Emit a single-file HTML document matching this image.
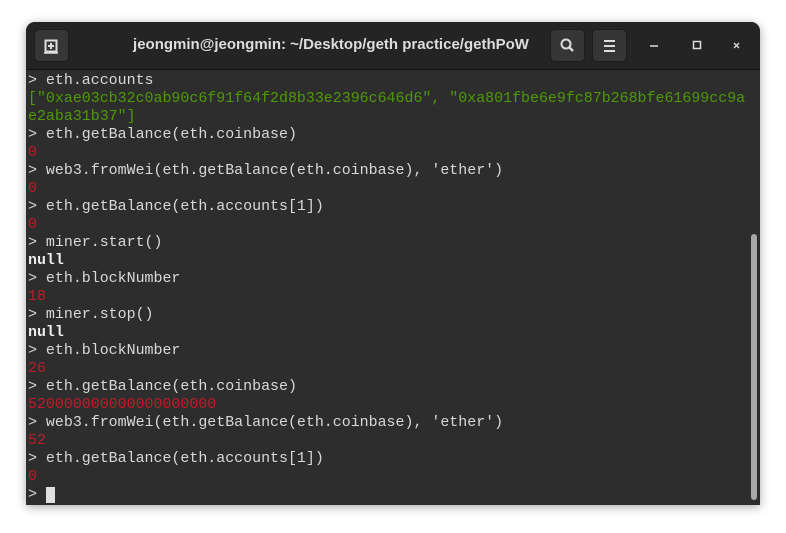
<!DOCTYPE html>
<html><head><style>
body{margin:0;width:786px;height:533px;background:#fff;position:relative;overflow:hidden;font-family:"Liberation Sans",sans-serif}
.win{position:absolute;left:26px;top:22px;width:734px;height:483px;background:#2d2d2d;border-radius:9px 9px 0 0;box-shadow:0 2px 10px rgba(0,0,0,.35);overflow:hidden}
.hd{position:absolute;left:0;top:0;width:734px;height:47px;background:#242424;border-bottom:1px solid #111}
.btn{position:absolute;top:7px;width:35px;height:33px;background:#363636;border-radius:5px;border:1px solid #1c1c1c;box-sizing:border-box}
.title{position:absolute;left:0;width:610px;top:14px;text-align:center;color:#ddd;font-weight:bold;font-size:15px;white-space:nowrap}
.term{position:absolute;left:2px;top:50px;font-family:"Liberation Mono",monospace;font-size:14.95px;line-height:18px;color:#d8d8d8;white-space:pre}
.g{color:#4e9a06}.r{color:#c01c28}.b{font-weight:bold;color:#ececec}
.sb{position:absolute;left:725px;top:212px;width:6px;height:266px;background:#a8a8a8;border-radius:3px}
</style></head><body>
<div class="win">
<div class="hd">
<div class="btn" style="left:8px"><svg width="35" height="33" style="position:absolute;left:-1px;top:-1px"><rect x="11.5" y="11.5" width="11" height="11" fill="none" stroke="#ddd" stroke-width="2"/><path d="M17 14v6M14 17h6" stroke="#ddd" stroke-width="2"/><path d="M10 24h14" stroke="#ddd" stroke-width="1.5"/></svg></div>
<div class="title">jeongmin@jeongmin: ~/Desktop/geth practice/gethPoW</div>
<div class="btn" style="left:524px"><svg width="35" height="33" style="position:absolute;left:-1px;top:-1px"><circle cx="16" cy="15" r="4.5" fill="none" stroke="#ddd" stroke-width="2"/><path d="M19 18l4 4" stroke="#ddd" stroke-width="2.4"/></svg></div>
<div class="btn" style="left:566px"><svg width="35" height="33" style="position:absolute;left:-1px;top:-1px"><path d="M12 12h11M12 17h11M12 22h11" stroke="#ddd" stroke-width="2"/></svg></div>
<svg width="120" height="47" style="position:absolute;left:614px;top:0"><path d="M10 24h8" stroke="#ddd" stroke-width="1.5"/><rect x="53.5" y="19.5" width="7" height="7" fill="none" stroke="#ddd" stroke-width="1.5"/><path d="M94 21l5 5M99 21l-5 5" stroke="#ddd" stroke-width="1.3"/></svg>
</div>
<div class="term">&gt; eth.accounts
<span class="g">["0xae03cb32c0ab90c6f91f64f2d8b33e2396c646d6", "0xa801fbe6e9fc87b268bfe61699cc9a
e2aba31b37"]</span>
&gt; eth.getBalance(eth.coinbase)
<span class="r">0</span>
&gt; web3.fromWei(eth.getBalance(eth.coinbase), 'ether')
<span class="r">0</span>
&gt; eth.getBalance(eth.accounts[1])
<span class="r">0</span>
&gt; miner.start()
<span class="b">null</span>
&gt; eth.blockNumber
<span class="r">18</span>
&gt; miner.stop()
<span class="b">null</span>
&gt; eth.blockNumber
<span class="r">26</span>
&gt; eth.getBalance(eth.coinbase)
<span class="r">520000000000000000000</span>
&gt; web3.fromWei(eth.getBalance(eth.coinbase), 'ether')
<span class="r">52</span>
&gt; eth.getBalance(eth.accounts[1])
<span class="r">0</span>
&gt; <span style="background:#e0e0e0">&#160;</span></div>
<div class="sb"></div>
</div>
</body></html>
